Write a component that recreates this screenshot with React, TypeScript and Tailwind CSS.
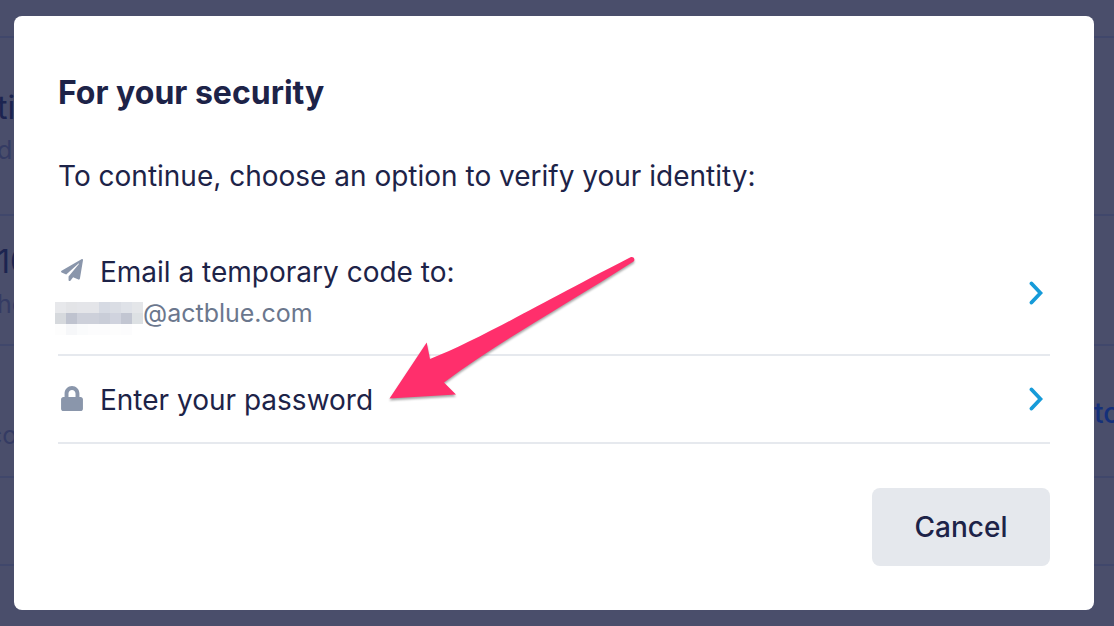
import { FaLock, FaPaperPlane } from "react-icons/fa";

// rows of the account page that sit behind the dialog
const accountRows = [
	{ size: "h-[38px]", shift: "", title: "", note: "", action: "" },
	{ size: "h-[178px]", shift: "-ml-[3px]", title: "ti", note: "d", action: "" },
	{ size: "h-[130px]", shift: "-ml-[3px]", title: "10", note: "ho", action: "" },
	{ size: "h-[132px]", shift: "-ml-3", title: "", note: "co", action: "to" },
	{ size: "h-[88px]", shift: "", title: "", note: "", action: "" },
];

// shades of the blurred part of the email address
const redacted = [
	["bg-[#e7e8eb]", "bg-[#e3e4e7]", "bg-[#e4e5e9]", "bg-[#e4e5e9]", "bg-[#d6dae3]", "bg-[#dadde4]", "bg-[#dfe2e8]", "bg-[#e4e6e9]"],
	["bg-[#d6d9dd]", "bg-[#bfc3cf]", "bg-[#cdd0da]", "bg-[#cdd0da]", "bg-[#c9cdd8]", "bg-[#d0d3de]", "bg-[#c2c6d2]", "bg-[#dde1e4]"],
	["bg-[#fdfdfd]", "bg-[#f6f7f9]", "bg-[#fafbfc]", "bg-[#fcfcfd]", "bg-[#fcfcfd]", "bg-[#fdfdfd]", "bg-[#fcfcfd]", "bg-white"],
];

function Chevron() {
	return (
		<svg viewBox="0 0 14 24" className="w-[14px] h-6 shrink-0 mr-[7px] mb-[2px]" fill="none" aria-hidden="true">
			<path d="M2.5 2.5 L11.5 12 L2.5 21.5" stroke="#169bd9" strokeWidth="3.8" strokeLinecap="round" />
		</svg>
	);
}

function Redacted() {
	return (
		<span className="grid grid-cols-8 w-[88px] -ml-[3px] mt-[10px]" aria-hidden="true">
			{redacted.flat().map((shade, k) => (
				<span key={k} className={`h-[11px] ${shade}`} />
			))}
		</span>
	);
}

function Backdrop() {
	return (
		<div className="absolute inset-0 overflow-hidden" aria-hidden="true">
			{accountRows.map((row, k) => (
				<div key={k} className={`${row.size} pt-1 flex items-center justify-between border-b-2 border-[#40476b]`}>
					<div className={row.shift}>
						<p className="h-11 text-[32px] leading-11 text-[#1c2450]">{row.title}</p>
						<p className="h-10 text-[25px] leading-10 text-[#343b63]">{row.note}</p>
					</div>
					<p className="w-5 text-[28px] font-medium text-[#15307a]">{row.action}</p>
				</div>
			))}
		</div>
	);
}

function Arrow() {
	return (
		<svg
			viewBox="0 0 250 148"
			className="absolute left-[374px] top-[238px] w-[250px] h-[148px] pointer-events-none drop-shadow-[0_2px_1px_rgba(0,0,0,0.35)]"
			aria-hidden="true"
		>
			<path
				d="M1.5 144.5 L38.7 88.5 L42 105 C90 86 140 56 242.5 3.2 C246 2 247.5 6 245.5 7.5 C178 51 110 88 56 128.5 L68 140.5 Z"
				fill="#ff2f6c"
			/>
		</svg>
	);
}

export default function App() {
	return (
		<div className="relative min-h-screen bg-[#4a4e6b] pl-[14px] pr-5 py-4 font-['Inter','Liberation_Sans',sans-serif]">
			<Backdrop />

			<div
				role="dialog"
				aria-labelledby="security-title"
				className="relative bg-white rounded-lg px-11 pt-14 pb-11 text-[#1d2348]"
			>
				<h1 id="security-title" className="text-[32px] leading-[42px] font-bold">
					For your security
				</h1>

				<p className="mt-[42px] text-[28px] leading-10">To continue, choose an option to verify your identity:</p>

				{/* verify options */}
				<div className="mt-9">
					<button className="w-full flex items-center justify-between text-left pt-5 pb-[19px] border-b-2 border-[#e6e9ee]">
						<span>
							<span className="flex items-center text-[28px] leading-10">
								<FaPaperPlane className="w-7 h-[22px] mr-[14px] mb-1 text-[#8a96ab]" />
								Email a temporary code to:
							</span>
							<span className="flex items-start text-[25px] leading-[42px] text-[#6b778d]">
								<Redacted />
								@actblue.com
							</span>
						</span>
						<Chevron />
					</button>

					<button className="w-full flex items-center justify-between text-left pt-6 pb-[22px] border-b-2 border-[#e6e9ee]">
						<span className="flex items-center text-[28px] leading-10">
							<FaLock className="w-7 h-[25px] mr-[14px] mb-1 text-[#8a96ab]" />
							Enter your password
						</span>
						<Chevron />
					</button>
				</div>

				<div className="mt-11 flex justify-end">
					<button className="w-[178px] h-[78px] rounded-lg bg-[#e5e8ed] text-[28px] font-medium">Cancel</button>
				</div>

				<Arrow />
			</div>
		</div>
	);
}
